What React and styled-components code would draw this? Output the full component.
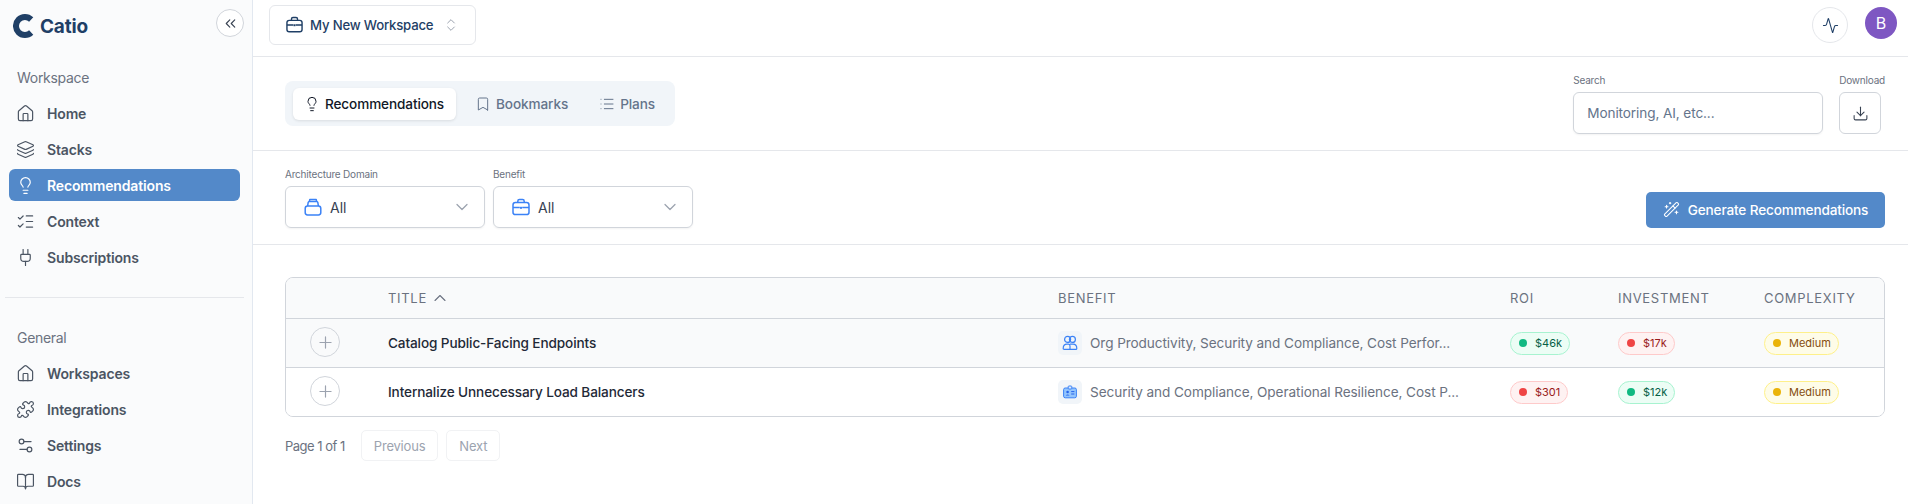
import styled, { createGlobalStyle } from 'styled-components';
import {
  Home, Layers, Lightbulb, ListChecks, Plug, Puzzle, Settings2, BookOpen,
  ChevronsLeft, ChevronsUpDown, Bookmark, List, Download, Activity,
  WandSparkles, ChevronDown, ChevronUp, Plus,
} from 'lucide-react';

const GlobalStyle = createGlobalStyle`
  html, body { margin: 0; padding: 0; height: 504px; background: #fff; }
  body { font-family: "Inter", "Noto Sans", sans-serif; overflow: hidden; }
  * { box-sizing: border-box; }
  svg { flex: none; }
`;

const workspaceNav = [
  { label: 'Home', icon: Home },
  { label: 'Stacks', icon: Layers },
  { label: 'Recommendations', icon: Lightbulb, active: true },
  { label: 'Context', icon: ListChecks },
  { label: 'Subscriptions', icon: Plug },
];

const generalNav = [
  { label: 'Workspaces', icon: Home },
  { label: 'Integrations', icon: Puzzle },
  { label: 'Settings', icon: Settings2 },
  { label: 'Docs', icon: BookOpen },
];

const rows = [
  {
    title: 'Catalog Public-Facing Endpoints',
    benefit: 'Org Productivity, Security and Compliance, Cost Perfor...',
    icon: 'people',
    roi: { kind: 'good', text: '$46k' },
    investment: { kind: 'bad', text: '$17k' },
    shaded: true,
  },
  {
    title: 'Internalize Unnecessary Load Balancers',
    benefit: 'Security and Compliance, Operational Resilience, Cost P...',
    icon: 'badge',
    roi: { kind: 'bad', text: '$301' },
    investment: { kind: 'good', text: '$12k' },
  },
];

const pillColors = {
  good: { bg: '#ecfdf5', border: '#a7f3d0', dot: '#10b981', text: '#065f46' },
  bad: { bg: '#fef2f2', border: '#fecaca', dot: '#ef4444', text: '#991b1b' },
  warn: { bg: '#fefce8', border: '#fef08a', dot: '#eab308', text: '#854d0e' },
};

function Logo() {
  return (
    <svg width="22" height="24" viewBox="1.8 0 22 24" fill="none">
      <path d="M20 5.5 A9 9 0 1 0 20 18.5" stroke="#1f3f66" strokeWidth="6" />
    </svg>
  );
}

function CaseIcon({ size = 18, color }) {
  return (
    <svg width={size} height={size} viewBox="0 0 18 18" fill="none" stroke={color} strokeWidth="1.5" strokeLinejoin="round">
      <rect x="1" y="4.6" width="16" height="12" rx="2.4" />
      <path d="M5.8 4.6 V3.2 Q5.8 1.6 7.4 1.6 H10.6 Q12.2 1.6 12.2 3.2 V4.6" />
      <path d="M1 9.6 H7.8 M10.2 9.6 H17" />
      <rect x="8" y="8.8" width="2" height="2" fill={color} stroke="none" />
    </svg>
  );
}

function StackIcon() {
  return (
    <svg width="18" height="18" viewBox="0 0 18 18" fill="none" stroke="#3b82f6" strokeWidth="1.5" strokeLinejoin="round">
      <rect x="1.2" y="8" width="15.6" height="9" rx="2.4" />
      <path d="M3.6 8 L4.2 4.4 Q4.4 3.4 5.4 3.4 H12.6 Q13.6 3.4 13.8 4.4 L14.4 8" />
      <path d="M5.4 3.4 L5.8 1.4 H12.2 L12.6 3.4" />
    </svg>
  );
}

function PeopleIcon() {
  return (
    <svg width="16" height="16" viewBox="0 0 16 16" fill="none" stroke="#3b82f6" strokeWidth="1.2">
      <circle cx="5.6" cy="4.4" r="3" />
      <circle cx="10.4" cy="4.4" r="3" />
      <path d="M1.2 13.4 Q1.2 9.2 5 9.2 H6.2 Q8 9.2 8 11 V14.4 H2.2 Q1.2 14.4 1.2 13.4 Z" />
      <path d="M8 9.2 H11 Q14.8 9.2 14.8 13.4 Q14.8 14.4 13.8 14.4 H8" />
    </svg>
  );
}

function BadgeIcon() {
  return (
    <svg width="14" height="14" viewBox="0 0 14 14">
      <rect x="0.6" y="3" width="12.8" height="9.8" rx="1.6" fill="#93c5fd" stroke="#3b82f6" strokeWidth="1" />
      <rect x="5.2" y="1" width="3.6" height="3" rx="0.8" fill="#dbeafe" stroke="#3b82f6" strokeWidth="1" />
      <circle cx="4.6" cy="7" r="1.3" fill="#2563eb" />
      <path d="M2.6 10.6 Q4.6 8.2 6.6 10.6 Z" fill="#2563eb" />
      <path d="M8.2 6.6 H11.4 M8.2 9 H11.4" stroke="#2563eb" strokeWidth="1" />
    </svg>
  );
}

function NavList({ items }) {
  return items.map(({ label, icon: Icon, active }) => (
    <NavItem key={label} $active={active}>
      <Icon size={19} strokeWidth={1.5} />
      <span>{label}</span>
    </NavItem>
  ));
}

function Pill({ kind, children }) {
  return (
    <PillBox $kind={kind}>
      <Dot $kind={kind} />
      {children}
    </PillBox>
  );
}

export default function App() {
  return (
    <>
      <GlobalStyle />
      <Page>
        <Sidebar>
          <Brand>
            <Logo />
            <BrandName>Catio</BrandName>
            <Collapse><ChevronsLeft size={17} strokeWidth={1.6} /></Collapse>
          </Brand>
          <NavSection>
            <SectionLabel>Workspace</SectionLabel>
            <NavList items={workspaceNav} />
          </NavSection>
          <Divider />
          <NavSection>
            <SectionLabel>General</SectionLabel>
            <NavList items={generalNav} />
          </NavSection>
        </Sidebar>

        <Main>
          <TopBar>
            <WorkspaceButton>
              <CaseIcon size={17} color="#1f3f66" />
              <span>My New Workspace</span>
              <ChevronsUpDown size={16} strokeWidth={1.5} color="#9ca3af" />
            </WorkspaceButton>
            <TopRight>
              <RoundIcon><Activity size={17} strokeWidth={1.5} /></RoundIcon>
              <Avatar>B</Avatar>
            </TopRight>
          </TopBar>

          <TabsRow>
            <Tabs>
              <Tab $active><Lightbulb size={16} strokeWidth={1.5} />Recommendations</Tab>
              <Tab><Bookmark size={16} strokeWidth={1.5} />Bookmarks</Tab>
              <Tab><List size={16} strokeWidth={1.5} />Plans</Tab>
            </Tabs>
            <Tools>
              <Field>
                <SmallLabel>Search</SmallLabel>
                <SearchBox>Monitoring, AI, etc...</SearchBox>
              </Field>
              <Field>
                <SmallLabel>Download</SmallLabel>
                <DownloadBox><Download size={17} strokeWidth={1.5} /></DownloadBox>
              </Field>
            </Tools>
          </TabsRow>

          <FilterRow>
            <Filters>
              <Field>
                <SmallLabel>Architecture Domain</SmallLabel>
                <Select>
                  <StackIcon />
                  <SelectValue>All</SelectValue>
                  <ChevronDown size={20} strokeWidth={1.5} color="#9ca3af" />
                </Select>
              </Field>
              <Field>
                <SmallLabel>Benefit</SmallLabel>
                <Select>
                  <CaseIcon color="#3b82f6" />
                  <SelectValue>All</SelectValue>
                  <ChevronDown size={20} strokeWidth={1.5} color="#9ca3af" />
                </Select>
              </Field>
            </Filters>
            <Generate><WandSparkles size={17} strokeWidth={1.5} />Generate Recommendations</Generate>
          </FilterRow>

          <Content>
            <Table>
              <HeadRow>
                <span />
                <HeadCell>TITLE<ChevronUp size={20} strokeWidth={1.3} /></HeadCell>
                <HeadCell>BENEFIT</HeadCell>
                <HeadCell>ROI</HeadCell>
                <HeadCell>INVESTMENT</HeadCell>
                <HeadCell>COMPLEXITY</HeadCell>
              </HeadRow>
              {rows.map((row) => (
                <BodyRow key={row.title} $shaded={row.shaded}>
                  <AddButton><Plus size={19} strokeWidth={1.5} /></AddButton>
                  <Title>{row.title}</Title>
                  <Benefit>
                    <BenefitIcon>{row.icon === 'people' ? <PeopleIcon /> : <BadgeIcon />}</BenefitIcon>
                    <BenefitText>{row.benefit}</BenefitText>
                  </Benefit>
                  <div><Pill kind={row.roi.kind}>{row.roi.text}</Pill></div>
                  <div><Pill kind={row.investment.kind}>{row.investment.text}</Pill></div>
                  <div><Pill kind="warn">Medium</Pill></div>
                </BodyRow>
              ))}
            </Table>
            <Pagination>
              <PageText>Page 1 of 1</PageText>
              <PageButton>Previous</PageButton>
              <PageButton>Next</PageButton>
            </Pagination>
          </Content>
        </Main>
      </Page>
    </>
  );
}

const Page = styled.div`
  display: flex;
  height: 504px;
  overflow: hidden;
`;

const Sidebar = styled.aside`
  width: 253px;
  flex: none;
  background: #fafbfc;
  border-right: 1px solid #e2e8f0;
  padding: 0 12px 0 9px;
`;

const Brand = styled.div`
  display: flex;
  align-items: center;
  height: 56px;
  padding: 0 0 4px 4px;
  gap: 5px;
`;

const BrandName = styled.div`
  font-size: 19px;
  font-weight: 700;
  color: #1f3f66;
  letter-spacing: -0.2px;
`;

const Collapse = styled.div`
  margin-left: auto;
  margin-right: -4px;
  margin-bottom: 6px;
  width: 28px;
  height: 28px;
  border-radius: 50%;
  border: 1px solid #d1d5db;
  background: #fff;
  color: #374151;
  display: flex;
  align-items: center;
  justify-content: center;
`;

const NavSection = styled.nav`
  display: flex;
  flex-direction: column;
  gap: 4px;
`;

const SectionLabel = styled.div`
  font-size: 14px;
  letter-spacing: -0.3px;
  color: #6b7280;
  padding-left: 8px;
  margin: 13px 0 7px;
  line-height: 17px;
`;

const NavItem = styled.div`
  display: flex;
  align-items: center;
  height: 32px;
  gap: 12px;
  padding-left: 7px;
  border-radius: 6px;
  font-size: 14px;
  font-weight: 600;
  letter-spacing: -0.15px;
  color: ${(p) => (p.$active ? '#fff' : '#4b5563')};
  background: ${(p) => (p.$active ? '#5389c9' : 'transparent')};
`;

const Divider = styled.div`
  height: 1px;
  background: #e5e7eb;
  margin: 24px 0 18px -4px;
  width: 239px;
`;

const Main = styled.main`
  flex: 1;
  min-width: 0;
  display: flex;
  flex-direction: column;
`;

const TopBar = styled.header`
  display: flex;
  align-items: center;
  justify-content: space-between;
  height: 57px;
  flex: none;
  padding: 0 11px 7px 16px;
  border-bottom: 1px solid #e5e7eb;
`;

const WorkspaceButton = styled.div`
  display: flex;
  align-items: center;
  gap: 7px;
  width: 207px;
  height: 40px;
  padding: 0 0 0 16px;
  border: 1px solid #e5e7eb;
  border-radius: 6px;
  font-size: 13.2px;
  font-weight: 500;
  letter-spacing: -0.2px;
  color: #1f3f66;
  white-space: nowrap;
  span { margin-right: 3px; }
`;

const TopRight = styled.div`
  display: flex;
  align-items: center;
  gap: 17px;
`;

const RoundIcon = styled.div`
  width: 36px;
  height: 36px;
  margin-top: 1px;
  border-radius: 50%;
  border: 1px solid #e5e7eb;
  color: #1f3f66;
  display: flex;
  align-items: center;
  justify-content: center;
`;

const Avatar = styled.div`
  width: 32px;
  height: 32px;
  margin-bottom: 3px;
  border-radius: 50%;
  background: #7e57c2;
  color: #fff;
  font-size: 16px;
  display: flex;
  align-items: center;
  justify-content: center;
`;

const TabsRow = styled.section`
  display: flex;
  align-items: center;
  justify-content: space-between;
  height: 94px;
  flex: none;
  padding: 0 23px 0 32px;
  border-bottom: 1px solid #e5e7eb;
`;

const Tabs = styled.div`
  display: flex;
  align-items: center;
  gap: 8px;
  height: 45px;
  padding: 0 8px;
  border-radius: 8px;
  background: #f1f5f9;
`;

const Tab = styled.div`
  display: flex;
  align-items: center;
  gap: 5px;
  height: 32px;
  padding: 0 12px 0 11px;
  border-radius: 6px;
  font-size: 13.6px;
  font-weight: 500;
  letter-spacing: -0.12px;
  color: ${(p) => (p.$active ? '#111827' : '#64748b')};
  background: ${(p) => (p.$active ? '#fff' : 'transparent')};
  box-shadow: ${(p) => (p.$active ? '0 1px 3px rgba(0,0,0,.1)' : 'none')};
`;

const Tools = styled.div`
  display: flex;
  gap: 16px;
`;

const Field = styled.div`
  display: flex;
  flex-direction: column;
  gap: 5px;
`;

const SmallLabel = styled.div`
  font-size: 10px;
  line-height: 14px;
  letter-spacing: -0.2px;
  color: #6b7280;
`;

const SearchBox = styled.div`
  width: 250px;
  height: 42px;
  display: flex;
  align-items: center;
  padding: 0 13px;
  border: 1px solid #d1d5db;
  border-radius: 6px;
  box-shadow: 0 1px 2px rgba(0,0,0,.05);
  font-size: 13.6px;
  letter-spacing: -0.1px;
  color: #64748b;
`;

const DownloadBox = styled.div`
  width: 42px;
  height: 42px;
  border: 1px solid #d1d5db;
  border-radius: 6px;
  color: #374151;
  display: flex;
  align-items: center;
  justify-content: center;
`;

const FilterRow = styled.section`
  display: flex;
  align-items: center;
  justify-content: space-between;
  height: 94px;
  flex: none;
  padding: 0 23px 0 32px;
  border-bottom: 1px solid #e5e7eb;
`;

const Filters = styled.div`
  display: flex;
  gap: 8px;
`;

const Select = styled.div`
  width: 200px;
  height: 42px;
  display: flex;
  align-items: center;
  gap: 8px;
  padding: 0 12px 0 18px;
  border: 1px solid #d1d5db;
  border-radius: 6px;
  box-shadow: 0 1px 2px rgba(0,0,0,.05);
`;

const SelectValue = styled.span`
  flex: 1;
  font-size: 14px;
  color: #374151;
`;

const Generate = styled.div`
  display: flex;
  align-items: center;
  justify-content: center;
  gap: 8px;
  width: 239px;
  height: 36px;
  margin-top: 24px;
  border-radius: 5px;
  background: #5389c9;
  color: #fff;
  font-size: 13.6px;
  font-weight: 500;
  letter-spacing: -0.15px;
`;

const Content = styled.section`
  padding: 32px 23px 0 32px;
`;

const Table = styled.div`
  border: 1px solid #d1d5db;
  border-radius: 8px;
  overflow: hidden;
`;

const columns = '102px 670px 452px 108px 146px 1fr';

const HeadRow = styled.div`
  display: grid;
  grid-template-columns: ${columns};
  align-items: center;
  height: 41px;
  background: #f9fafb;
  border-bottom: 1px solid #d1d5db;
`;

const HeadCell = styled.div`
  display: flex;
  align-items: center;
  gap: 3px;
  font-size: 13px;
  letter-spacing: 0.7px;
  color: #6b7280;
`;

const BodyRow = styled.div`
  display: grid;
  grid-template-columns: ${columns};
  align-items: center;
  height: 48px;
  background: ${(p) => (p.$shaded ? '#f9fafb' : '#fff')};
  & + & { height: 49px; border-top: 1px solid #d1d5db; }
`;

const AddButton = styled.div`
  width: 30px;
  height: 30px;
  margin: 0 0 2px 24px;
  border-radius: 50%;
  border: 1px solid #d1d5db;
  color: #9ca3af;
  display: flex;
  align-items: center;
  justify-content: center;
`;

const Title = styled.div`
  font-size: 13.6px;
  font-weight: 450;
  letter-spacing: -0.12px;
  color: #1f2937;
`;

const Benefit = styled.div`
  display: flex;
  align-items: center;
  gap: 8px;
`;

const BenefitIcon = styled.div`
  width: 24px;
  height: 24px;
  flex: none;
  border-radius: 5px;
  background: #f1f5f9;
  display: flex;
  align-items: center;
  justify-content: center;
`;

const BenefitText = styled.span`
  font-size: 13.6px;
  letter-spacing: -0.08px;
  color: #6b7280;
  white-space: nowrap;
`;

const PillBox = styled.span`
  display: inline-flex;
  align-items: center;
  gap: 8px;
  height: 23px;
  padding: 0 7px 0 8px;
  border-radius: 12px;
  font-size: 11px;
  background: ${(p) => pillColors[p.$kind].bg};
  border: 1px solid ${(p) => pillColors[p.$kind].border};
  color: ${(p) => pillColors[p.$kind].text};
`;

const Dot = styled.i`
  width: 8px;
  height: 8px;
  border-radius: 50%;
  background: ${(p) => pillColors[p.$kind].dot};
`;

const Pagination = styled.div`
  display: flex;
  align-items: center;
  gap: 8px;
  margin-top: 13px;
`;

const PageText = styled.span`
  font-size: 13px;
  letter-spacing: -0.5px;
  color: #6b7280;
  margin-right: 8px;
`;

const PageButton = styled.div`
  height: 31px;
  display: flex;
  align-items: center;
  padding: 0 12px;
  border: 1px solid #f1f2f4;
  border-radius: 5px;
  font-size: 13px;
  letter-spacing: -0.2px;
  color: #9ca3af;
`;
